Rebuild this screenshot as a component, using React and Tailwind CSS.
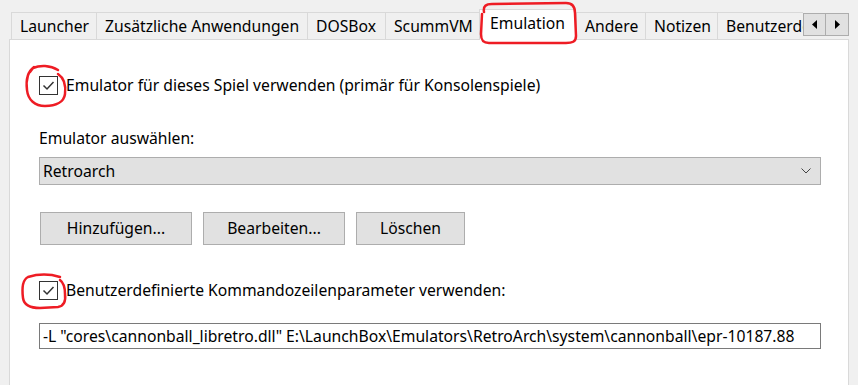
import React from "react";

const tabs = [
  { label: "Launcher", w: "w-[85px]" },
  { label: "Zusätzliche Anwendungen", w: "w-[211px]" },
  { label: "DOSBox", w: "w-[78px]" },
  { label: "ScummVM", w: "w-[94px]" },
  { label: "Emulation", w: "w-[97px]", active: true },
  { label: "Andere", w: "w-[69px]" },
  { label: "Notizen", w: "w-[72px]" },
  { label: "Benutzerdefinierte Felder", w: "w-[120px]" },
];

function Check() {
  return (
    <div className="w-[19px] h-[19px] border border-[#333333] bg-white flex items-center justify-center shrink-0">
      <svg width="13" height="13" viewBox="0 0 13 13">
        <polyline points="1.5,6.5 5,10 11.5,3" fill="none" stroke="#333" strokeWidth="1.5" />
      </svg>
    </div>
  );
}

function Btn({ children, w }) {
  return (
    <div className={`${w} h-[33px] bg-[#e1e1e1] border border-[#adadad] flex items-center justify-center pt-[1px]`}>
      {children}
    </div>
  );
}

export default function App() {
  return (
    <div className="relative w-[858px] h-[385px] overflow-hidden bg-[#f0f0f0] font-['Noto_Sans',sans-serif] text-[15.7px] text-black">
      {/* tab strip */}
      <div className="relative z-10 h-[40px] flex items-end pl-[11px]">
        <div className="flex items-end w-[792px] h-full overflow-hidden">
          {tabs.map((t) =>
            t.active ? (
              <div
                key={t.label}
                className={`${t.w} shrink-0 h-[31px] bg-white border-x border-t border-[#d9d9d9] flex items-center justify-center pb-[2px]`}
              >
                {t.label}
              </div>
            ) : (
              <div
                key={t.label}
                className={`${t.w} shrink-0 h-[27px] mb-[1px] border-l border-t border-[#d9d9d9] flex items-center pl-[8px] pt-[1px] whitespace-nowrap overflow-hidden`}
              >
                {t.label}
              </div>
            )
          )}
        </div>
        <div className="self-start mt-[13px] flex">
          <div className="w-[23px] h-[23px] bg-[#e1e1e1] border border-[#adadad] flex items-center justify-center">
            <svg width="6" height="9" viewBox="0 0 6 9"><polygon points="5,0 5,9 0,4.5" fill="#000" /></svg>
          </div>
          <div className="w-[23px] h-[23px] bg-[#e1e1e1] border border-l-0 border-[#adadad] flex items-center justify-center">
            <svg width="6" height="9" viewBox="0 0 6 9"><polygon points="1,0 1,9 6,4.5" fill="#000" /></svg>
          </div>
        </div>
      </div>

      {/* panel */}
      <div className="-mt-[1px] ml-[9px] w-[840px] h-[400px] bg-white border border-[#d9d9d9] px-[29px] pt-[36px]">
        <div className="flex items-center gap-[8px] h-[19px]">
          <Check />
          <span className="pt-[1px]">Emulator für dieses Spiel verwenden (primär für Konsolenspiele)</span>
        </div>

        <div className="mt-[32px] h-[20px] leading-[20px] pt-[1px]">Emulator auswählen:</div>

        <div className="mt-[10px] w-[782px] h-[28px] bg-[#e1e1e1] border border-[#adadad] flex items-center justify-between pl-[3px] pr-[9px]">
          <span className="pt-[2px]">Retroarch</span>
          <svg width="10" height="6" viewBox="0 0 10 6">
            <polyline points="0.5,0.5 5,5 9.5,0.5" fill="none" stroke="#444" strokeWidth="1" />
          </svg>
        </div>

        <div className="mt-[27px] ml-[1px] flex gap-[11px]">
          <Btn w="w-[152px]">Hinzufügen...</Btn>
          <Btn w="w-[142px]">Bearbeiten...</Btn>
          <Btn w="w-[109px]">Löschen</Btn>
        </div>

        <div className="mt-[36px] flex items-center gap-[8px] h-[19px]">
          <Check />
          <span className="pt-[1px]">Benutzerdefinierte Kommandozeilenparameter verwenden:</span>
        </div>

        <div className="mt-[23px] w-[782px] h-[26px] border border-[#7a7a7a] flex items-center pl-[3px] pt-[2px] whitespace-nowrap overflow-hidden">
          -L "cores\cannonball_libretro.dll" E:\LaunchBox\Emulators\RetroArch\system\cannonball\epr-10187.88
        </div>
      </div>

      {/* red hand-drawn annotations */}
      <svg className="absolute inset-0 pointer-events-none z-20" width="858" height="385" viewBox="0 0 858 385">
        <g fill="none" stroke="#ee1c24" strokeWidth="2.5" strokeLinecap="round" strokeLinejoin="round">
          <path d="M484 12 C483 6 486 4 492 4 L566 3 C573 3 575 7 575 13 L576 36 C576 42 572 43 566 43 L489 43 C483 43 481 40 481 34 L482 14" />
          <path d="M58 70 C50 65 40 65 33 68 L30 72 M34 67 C27 72 26 82 27 90 C28 100 35 106 45 106 C56 106 64 102 65 94 C66 86 64 78 58 74" />
          <path d="M60 277 C50 274 38 274 28 277 C22 280 22 290 23 298 C24 305 30 308 40 308 L58 307 C64 306 66 302 65 294 C65 288 64 283 60 280" />
        </g>
      </svg>
    </div>
  );
}
